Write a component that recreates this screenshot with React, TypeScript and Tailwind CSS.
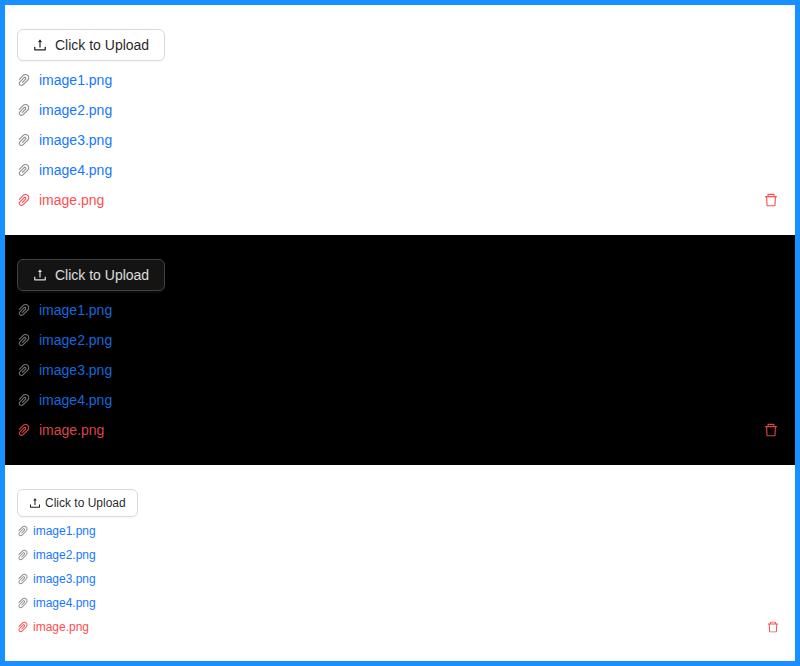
import React from "react";
import { AiOutlineUpload, AiOutlinePaperClip, AiOutlineDelete } from "react-icons/ai";

const names = ["image1.png", "image2.png", "image3.png", "image4.png"];

// Trims the empty margin round the glyphs so that they fill their em box.
const iconBox = "64 64 896 896";

type Theme = { panel: string; button: string; clip: string; link: string; error: string };

const light: Theme = {
  panel: "bg-white",
  button: "bg-white border-[#d9d9d9] text-black/88 shadow-[0_2px_0_rgba(0,0,0,0.02)]",
  clip: "text-black/45",
  link: "text-[#1677ff]",
  error: "text-[#ff4d4f]",
};

const dark: Theme = {
  panel: "bg-black",
  button: "bg-[#141414] border-[#424242] text-white/85 shadow-[0_2px_0_rgba(255,255,255,0.04)]",
  clip: "text-white/45",
  link: "text-[#1668dc]",
  error: "text-[#dc4446]",
};

function Panel({ theme, compact = false }: { theme: Theme; compact?: boolean }) {
  const row = compact ? "h-5 mt-1 text-[12px]" : "h-[22px] mt-2 text-[14px]";
  const gap = compact ? "px-1" : "px-2";
  return (
    <section className={`px-3 py-6 ${theme.panel} ${compact ? "h-[196px]" : "h-[230px]"}`}>
      <button
        className={`flex items-center border ${theme.button} ${
          compact ? "h-7 gap-1 rounded-[6px] px-[11px] text-[12px]" : "h-8 gap-2 rounded-[6px] px-[15px] text-[14px]"
        }`}
      >
        <AiOutlineUpload viewBox={iconBox} stroke="none" />
        <span>Click to Upload</span>
      </button>
      <ul>
        {names.map((name) => (
          <li key={name} className={`flex items-center ${row}`}>
            <AiOutlinePaperClip viewBox={iconBox} stroke="none" className={theme.clip} />
            <a className={`${gap} ${theme.link}`}>{name}</a>
          </li>
        ))}
        <li className={`flex items-center ${row} ${theme.error}`}>
          <AiOutlinePaperClip viewBox={iconBox} stroke="none" />
          <a className={`flex-1 ${gap}`}>image.png</a>
          <AiOutlineDelete viewBox={iconBox} stroke="none" className={compact ? "mr-1" : "mr-[5px]"} />
        </li>
      </ul>
    </section>
  );
}

export default function App() {
  return (
    <main className="h-[666px] w-[800px] overflow-hidden border-[5px] border-[#1890ff] font-['Liberation_Sans',Arial,sans-serif]">
      <Panel theme={light} />
      <Panel theme={dark} />
      <Panel theme={light} compact />
    </main>
  );
}
